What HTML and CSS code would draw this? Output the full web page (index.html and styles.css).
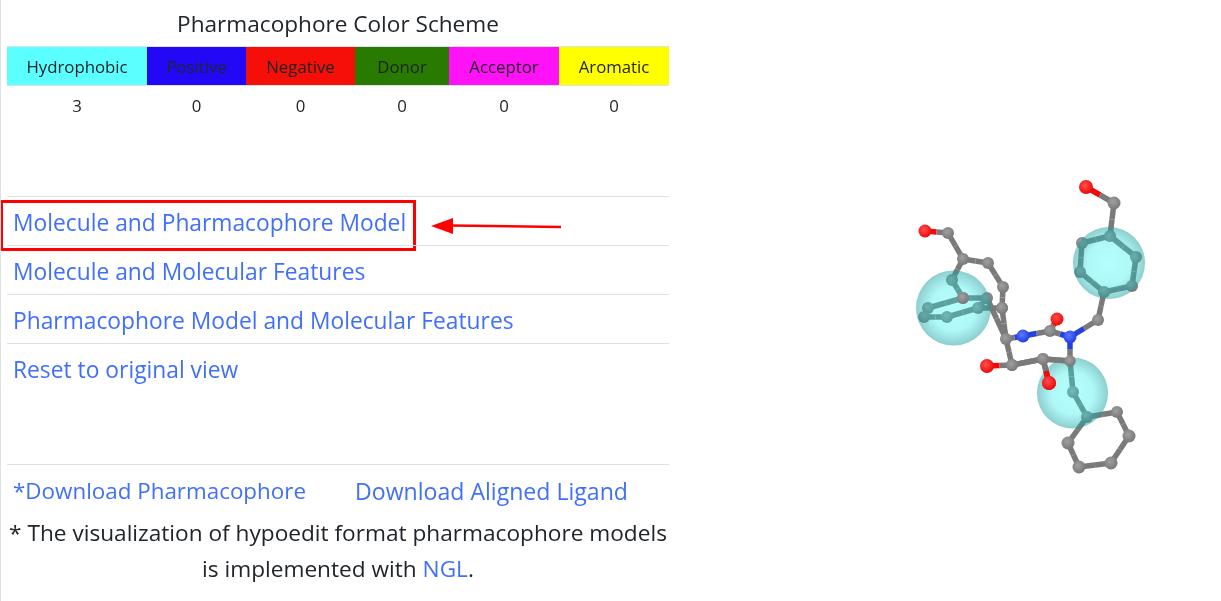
FILE: index.html
```html
<!DOCTYPE html>
<html lang="en">
<head>
  <meta charset="UTF-8">
  <title>Pharmacophore</title>
  <link rel="stylesheet" href="styles.css">
</head>
<body>
  <div class="page">
    <div class="left">
      <h5 class="title">Pharmacophore Color Scheme</h5>
      <table class="scheme">
        <tr>
          <th class="hydrophobic">Hydrophobic</th>
          <th class="positive">Positive</th>
          <th class="negative">Negative</th>
          <th class="donor">Donor</th>
          <th class="acceptor">Acceptor</th>
          <th class="aromatic">Aromatic</th>
        </tr>
        <tr>
          <td>3</td><td>0</td><td>0</td><td>0</td><td>0</td><td>0</td>
        </tr>
      </table>

      <ul class="views">
        <li class="marked">
          <a href="#">Molecule and Pharmacophore Model</a>
          <span class="red-box"></span>
          <svg class="arrow" width="131" height="20" viewBox="0 0 131 20">
            <path d="M20 9.5 L130 11" stroke="#f00" stroke-width="2.5" fill="none"/>
            <path d="M0 10 L22 2 L22 18 Z" fill="#f00"/>
          </svg>
        </li>
        <li><a href="#">Molecule and Molecular Features</a></li>
        <li><a href="#">Pharmacophore Model and Molecular Features</a></li>
        <li><a href="#">Reset to original view</a></li>
      </ul>

      <div class="downloads">
        <a class="dl-model" href="#">*Download Pharmacophore</a>
        <a class="dl-ligand" href="#">Download Aligned Ligand</a>
      </div>
      <p class="note">* The visualization of hypoedit format pharmacophore models is implemented with <a href="#">NGL</a>.</p>
    </div>

    <div class="viewer">
      <svg id="mol" width="552" height="601" viewBox="669 0 552 601"></svg>
    </div>
  </div>
  <script src="mol.js"></script>
</body>
</html>
```

FILE: styles.css
```css
html, body {
  margin: 0;
  padding: 0;
  height: 601px;
  overflow: hidden;
}
body {
  font-family: "Open Sans", "Noto Sans", Arial, sans-serif;
  background-color: white;
  color: #212529;
  border-left: 1px solid #dee2e6;
  box-sizing: border-box;
}
a {
  color: #4070fb;
  text-decoration: none;
}
.page {
  display: flex;
}
.left {
  width: 662px;
  margin-left: 6px;
  flex: none;
}
.title {
  margin: 0;
  height: 46px;
  line-height: 48px;
  font-size: 22.6px;
  font-weight: 400;
  text-align: center;
}
.scheme {
  width: 662px;
  border-collapse: collapse;
  table-layout: fixed;
  font-size: 16.8px;
}
.scheme th, .scheme td {
  padding: 0;
  font-weight: 400;
  text-align: center;
}
.scheme th {
  height: 39px;
  border-top: 1px solid #dee2e6;
  border-bottom: 1px solid #dee2e6;
  box-sizing: border-box;
}
.scheme td {
  height: 41px;
  padding-bottom: 2px;
  box-sizing: border-box;
}
.scheme th:nth-child(1) { width: 140px; }
.scheme th:nth-child(2) { width: 99px; }
.scheme th:nth-child(3) { width: 109px; }
.scheme th:nth-child(4) { width: 94px; }
.scheme th:nth-child(5) { width: 110px; }
.scheme th:nth-child(6) { width: 110px; }
.hydrophobic { background-color: #5cffff; }
.positive { background-color: #2208f5; }
.negative { background-color: #f50f08; }
.donor { background-color: #287a00; }
.acceptor { background-color: #ff12f5; }
.aromatic { background-color: #ffff00; }
.views {
  list-style: none;
  margin: 69px 0 0;
  padding: 0;
  font-size: 22.8px;
}
.views li {
  position: relative;
  height: 48px;
  line-height: 52px;
  padding-left: 6px;
  border-top: 1px solid #dee2e6;
}
.red-box {
  position: absolute;
  left: -7px;
  top: 3px;
  width: 410px;
  height: 45px;
  border: 3px solid #f00;
}
.arrow {
  position: absolute;
  left: 424px;
  top: 19px;
}
.downloads {
  margin-top: 72px;
  padding-left: 6px;
  border-top: 1px solid #dee2e6;
  height: 50px;
  line-height: 52px;
  display: flex;
  gap: 49px;
}
.dl-model {
  font-size: 22.4px;
}
.dl-ligand {
  font-size: 23.1px;
}
.note {
  margin: 0;
  font-size: 22.65px;
  line-height: 36px;
  text-align: center;
}
.viewer {
  flex: 1;
  position: relative;
  height: 601px;
}
#mol {
  position: absolute;
  left: 0;
  top: 0;
}
.sphere {
  mix-blend-mode: multiply;
}
.sphere-tint {
  fill: #30ffff;
  opacity: 0.3;
}
```

FILE: mol.js
```js
// atom positions read off the viewer canvas, c = carbon, o = oxygen, n = nitrogen
var atoms = {
  a1: [1086, 187, 'o', 7], a2: [1114, 203, 'c', 6.5],
  r1: [1110, 236, 'c', 6], r2: [1136, 257, 'c', 6], r3: [1132, 286, 'c', 6],
  r4: [1104, 292, 'c', 6], r5: [1080, 272, 'c', 6], r6: [1082, 243, 'c', 6],
  b1: [1098, 320, 'c', 6], n1: [1070, 337, 'n', 6.5], c1: [1050, 331, 'c', 6],
  o1: [1057, 319, 'o', 6.5], n2: [1023, 336, 'n', 6.5], c2: [1006, 339, 'c', 6],
  c3: [1012, 365, 'c', 6], o2: [987, 366, 'o', 7], c4: [1043, 359, 'c', 6],
  o3: [1049, 383, 'o', 7], c5: [1070, 361, 'c', 5.5],
  d1: [1073, 392, 'c', 6], d2: [1087, 417, 'c', 6], d3: [1117, 412, 'c', 6],
  d4: [1129, 436, 'c', 6.5], d5: [1111, 463, 'c', 6.5], d6: [1079, 467, 'c', 6.5], d7: [1068, 443, 'c', 6.5],
  e1: [925, 231, 'o', 6.5], e2: [948, 233, 'c', 6], e3: [963, 259, 'c', 6], e4: [988, 263, 'c', 6],
  e5: [1003, 287, 'c', 6], e6: [1002, 308, 'c', 6],
  f1: [952, 280, 'c', 6], f2: [963, 298, 'c', 6], f3: [987, 298, 'c', 6],
  f4: [978, 308, 'c', 6], f5: [947, 317, 'c', 6], f6: [928, 308, 'c', 6], f7: [924, 317, 'c', 6]
};
var bonds = [
  ['a1','a2'],['a2','r1'],['r1','r2'],['r2','r3'],['r3','r4'],['r4','r5'],['r5','r6'],['r6','r1'],
  ['r4','b1'],['b1','n1'],['n1','c1'],['c1','o1'],['c1','n2'],['n2','c2'],['c2','c3'],['c3','o2'],
  ['c3','c4'],['c4','o3'],['c4','c5'],['c5','n1'],['c5','d1'],['d1','d2'],['d2','d3'],['d3','d4'],
  ['d4','d5'],['d5','d6'],['d6','d7'],['d7','d2'],
  ['e1','e2'],['e2','e3'],['e3','e4'],['e4','e5'],['e5','e6'],['e6','c2'],['e3','f1'],['f1','f2'],
  ['f6','f2'],['f2','f3'],['f3','f4'],['f4','f5'],['f5','f7'],['f7','f6'],['f4','e6'],['f3','c2']
];
// these sit in front of the spheres
var front = ['c3', 'c4', 'c5', 'o3', 'f2', 'e6'];
var frontBonds = [['c3','c4'],['c4','o3'],['c4','c5']];

var colors = { c: '#7a7a7a', o: '#f00a0a', n: '#2440e0' };
var shine = { c: '#a0a0a0', o: '#ff5050', n: '#5a78ff' };
var spheres = [[953.5, 308, 37.5], [1109, 263, 36], [1072.5, 393, 35.5]];

function bondSvg(b) {
  // half bonds so that each end takes the colour of its atom
  var p = atoms[b[0]], q = atoms[b[1]];
  var mx = (p[0] + q[0]) / 2, my = (p[1] + q[1]) / 2;
  return '<line x1="' + p[0] + '" y1="' + p[1] + '" x2="' + mx + '" y2="' + my + '" stroke="' + colors[p[2]] + '" stroke-width="5.5"/>' +
    '<line x1="' + mx + '" y1="' + my + '" x2="' + q[0] + '" y2="' + q[1] + '" stroke="' + colors[q[2]] + '" stroke-width="5.5"/>';
}
function atomSvg(k) {
  var a = atoms[k];
  return '<circle cx="' + a[0] + '" cy="' + a[1] + '" r="' + a[3] + '" fill="url(#atom-' + a[2] + ')"/>';
}

var svg = '<defs>' +
  '<radialGradient id="glow"><stop offset="0" stop-color="#efffff"/><stop offset="0.6" stop-color="#e7f5f5"/><stop offset="1" stop-color="#b6baba"/></radialGradient>';
Object.keys(colors).forEach(function (k) {
  svg += '<radialGradient id="atom-' + k + '" cx="0.42" cy="0.38" r="0.6"><stop offset="0" stop-color="' + shine[k] + '"/><stop offset="1" stop-color="' + colors[k] + '"/></radialGradient>';
});
svg += '</defs>';

bonds.forEach(function (b) { svg += bondSvg(b); });
Object.keys(atoms).forEach(function (k) { svg += atomSvg(k); });
spheres.forEach(function (s) {
  var c = 'cx="' + s[0] + '" cy="' + s[1] + '" r="' + s[2] + '"';
  svg += '<circle class="sphere" ' + c + ' fill="url(#glow)"/><circle class="sphere-tint" ' + c + '/>';
});
frontBonds.forEach(function (b) { svg += bondSvg(b); });
front.forEach(function (k) { svg += atomSvg(k); });
document.getElementById('mol').innerHTML = svg;
```
